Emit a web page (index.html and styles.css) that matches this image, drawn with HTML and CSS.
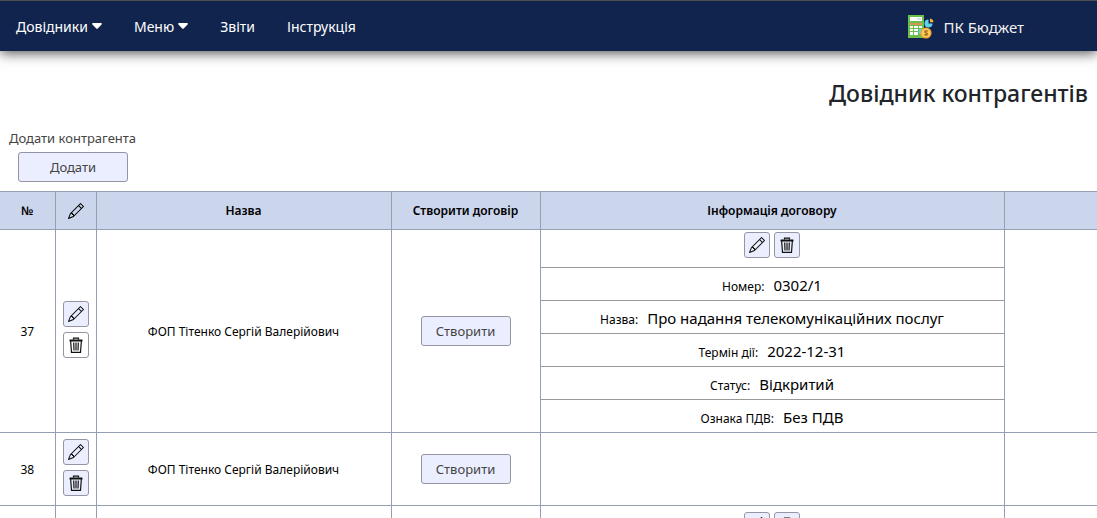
FILE: index.html
```html
<!DOCTYPE html>
<html lang="uk">
<head>
<meta charset="utf-8">
<title>Довідник контрагентів</title>
<link rel="stylesheet" href="styles.css">
</head>
<body>
<svg class="sprite" aria-hidden="true">
  <symbol id="pencil" viewBox="0 0 16 16">
    <path d="M12.146.146a.5.5 0 0 1 .708 0l3 3a.5.5 0 0 1 0 .708l-10 10a.5.5 0 0 1-.168.11l-5 2a.5.5 0 0 1-.65-.65l2-5a.5.5 0 0 1 .11-.168zM11.207 2.5 13.5 4.793 14.793 3.5 12.5 1.207zm1.586 3L10.5 3.207 4 9.707V10h.5a.5.5 0 0 1 .5.5v.5h.5a.5.5 0 0 1 .5.5v.5h.293zm-9.761 5.175-.106.106-1.528 3.821 3.821-1.528.106-.106A.5.5 0 0 1 5 12.500V12h-.5a.5.5 0 0 1-.5-.5V11h-.5a.5.5 0 0 1-.468-.325"/>
  </symbol>
  <symbol id="trash" viewBox="0 0 16 16">
    <path fill="none" stroke="currentColor" stroke-width="1.200" d="M5.500 2.500V1.200h5v1.300M2.600 3.500l.9 11.900h9l.9-11.900M5.700 5.500l.3 8M8 5.500v8M10.300 5.500l-.3 8"/>
    <rect x="1.500" y="2.600" width="13" height="1.800" rx=".5"/>
  </symbol>
  <symbol id="caret" viewBox="0 0 10 6">
    <path d="M1 0h8a.8.8 0 0 1 .6 1.400L5.700 5.600a1 1 0 0 1-1.400 0L.4 1.400A.8.8 0 0 1 1 0z"/>
  </symbol>
</svg>

<header class="topbar">
  <nav class="nav">
    <button class="nav-item" type="button">Довідники<svg class="caret" aria-hidden="true"><use href="#caret"/></svg></button>
    <button class="nav-item" type="button">Меню<svg class="caret" aria-hidden="true"><use href="#caret"/></svg></button>
    <a class="nav-item" href="#reports">Звіти</a>
    <a class="nav-item" href="#help">Інструкція</a>
  </nav>
  <a class="brand" href="#home">
    <svg class="logo" viewBox="0 0 26 24" aria-hidden="true">
      <rect width="16" height="23" fill="#6cc04a"/>
      <rect x="2" y="2" width="12" height="4" fill="#fff"/>
      <rect x="9" y="3" width="4" height="2" fill="#dce3e8"/>
      <path fill="#f08a5d" d="M2 8h3v2H2zM6 8h4v2H6zM11 8h3v2h-3z"/>
      <path fill="#fff" d="M2 11h3v2H2zM6 11h4v2H6zM11 11h3v2h-3zM2 14h3v2H2zM6 14h4v2H6zM2 17h3v3H2zM6 17h4v3H6z"/>
      <path fill="#5ed3e6" d="M11 14h4v5h-4zM20.500 4.500v4h4a4 4 0 1 1-4-4z"/>
      <path fill="#f9b233" d="M22 3.500a4 4 0 0 1 3.500 3.800H22z"/>
      <circle cx="18" cy="18" r="5.600" fill="#f5a833"/>
      <circle cx="18" cy="18" r="4" fill="#ffd05c"/>
      <path fill="none" stroke="#a8742a" stroke-width="1.200" d="M19.800 16.300c-.6-.9-3.300-.8-3.300.5 0 1.500 3.300.8 3.300 2.300 0 1.300-2.800 1.300-3.500.3M18 15v6"/>
    </svg>
    <span>ПК Бюджет</span>
  </a>
</header>

<main>
  <h1 class="title">Довідник контрагентів</h1>
  <section class="add">
    <label class="add-label" for="add">Додати контрагента</label>
    <button class="btn btn-add" id="add" type="button">Додати</button>
  </section>

  <table class="grid">
    <colgroup>
      <col class="c-num"><col class="c-tools"><col class="c-name"><col class="c-create"><col class="c-info"><col>
    </colgroup>
    <thead>
      <tr>
        <th>№</th>
        <th><svg class="icon" aria-label="Редагувати"><use href="#pencil"/></svg></th>
        <th>Назва</th>
        <th>Створити договір</th>
        <th>Інформація договору</th>
        <th></th>
      </tr>
    </thead>
    <tbody>
      <tr>
        <td>37</td>
        <td>
          <div class="tools">
            <button class="icon-btn" type="button" aria-label="Редагувати"><svg class="icon"><use href="#pencil"/></svg></button>
            <button class="icon-btn plain" type="button" aria-label="Видалити"><svg class="icon"><use href="#trash"/></svg></button>
          </div>
        </td>
        <td>ФОП Тітенко Сергій Валерійович</td>
        <td><button class="btn" type="button">Створити</button></td>
        <td>
          <div class="info-tools">
            <button class="icon-btn" type="button" aria-label="Редагувати"><svg class="icon"><use href="#pencil"/></svg></button>
            <button class="icon-btn" type="button" aria-label="Видалити"><svg class="icon"><use href="#trash"/></svg></button>
          </div>
          <p class="info"><span>Номер:</span><span class="value">0302/1</span></p>
          <p class="info"><span>Назва:</span><span class="value">Про надання телекомунікаційних послуг</span></p>
          <p class="info"><span>Термін дії:</span><span class="value">2022-12-31</span></p>
          <p class="info"><span>Статус:</span><span class="value">Відкритий</span></p>
          <p class="info"><span>Ознака ПДВ:</span><span class="value">Без ПДВ</span></p>
        </td>
        <td></td>
      </tr>
      <tr>
        <td>38</td>
        <td>
          <div class="tools">
            <button class="icon-btn" type="button" aria-label="Редагувати"><svg class="icon"><use href="#pencil"/></svg></button>
            <button class="icon-btn" type="button" aria-label="Видалити"><svg class="icon"><use href="#trash"/></svg></button>
          </div>
        </td>
        <td>ФОП Тітенко Сергій Валерійович</td>
        <td><button class="btn" type="button">Створити</button></td>
        <td></td>
        <td></td>
      </tr>
      <tr>
        <td></td>
        <td></td>
        <td></td>
        <td></td>
        <td>
          <div class="info-tools next">
            <button class="icon-btn" type="button" aria-label="Редагувати"><svg class="icon"><use href="#pencil"/></svg></button>
            <button class="icon-btn" type="button" aria-label="Видалити"><svg class="icon"><use href="#trash"/></svg></button>
          </div>
        </td>
        <td></td>
      </tr>
    </tbody>
  </table>
</main>
</body>
</html>
```
FILE: styles.css
```css
* { box-sizing: border-box; }

html { height: 100%; overflow: hidden; }

body {
  margin: 0;
  height: 100%;
  overflow: hidden;
  background: #fff;
  color: #000;
  font-family: "Noto Sans", "Open Sans", sans-serif;
  font-size: 12px;
}

button { font: inherit; color: inherit; }

.sprite { display: none; }

.topbar {
  display: flex;
  justify-content: space-between;
  align-items: center;
  height: 51px;
  padding: 0 73px 0 16px;
  border-top: 1px solid #4d4d4d;
  background: #11244d;
  color: #fff;
  font-size: 14px;
  box-shadow: 0 2px 12px rgba(0, 0, 0, 0.7);
}

.nav { display: flex; gap: 32px; }

.nav-item {
  display: flex;
  align-items: center;
  gap: 4px;
  padding: 0;
  border: 0;
  background: none;
  color: #fff;
  text-decoration: none;
}

.caret {
  width: 10px;
  height: 6px;
  fill: currentColor;
}

.brand {
  display: flex;
  align-items: center;
  gap: 9px;
  padding-top: 2px;
  color: #f0f0f0;
  font-size: 15px;
  text-decoration: none;
}

.logo { width: 26px; height: 24px; }

.title {
  margin: 0;
  padding: 26px 9px 0 0;
  color: #212529;
  font-size: 23px;
  font-weight: 500;
  line-height: 32px;
  text-align: right;
}

.add {
  display: flex;
  flex-direction: column;
  align-items: flex-start;
  gap: 4px;
  padding: 20px 9px 9px;
}

.add-label { color: #444; font-size: 13px; line-height: 19px; }

.btn {
  width: 90px;
  height: 30px;
  padding: 0;
  border: 1px solid #9494a4;
  border-radius: 3px;
  background: #ebeeff;
  color: #444;
  font-size: 13px;
}

.btn-add { width: 110px; margin-left: 9px; }

.grid {
  width: 100%;
  table-layout: fixed;
  border-collapse: collapse;
}

.c-num { width: 55px; }
.c-tools { width: 41px; }
.c-name { width: 295px; }
.c-create { width: 149px; }
.c-info { width: 464px; }

.grid th,
.grid td {
  padding: 0;
  border: 1px solid #94a0b2;
  text-align: center;
  vertical-align: middle;
}

.grid th:first-child,
.grid td:first-child { border-left: 0; }

.grid th:last-child,
.grid td:last-child { border-right: 0; }

.grid th {
  height: 38px;
  background: #cbd5ec;
  font-weight: 600;
}

.icon {
  display: block;
  width: 16px;
  height: 16px;
  margin: auto;
  fill: currentColor;
}

.icon-btn {
  width: 26px;
  height: 26px;
  padding: 0;
  border: 1px solid #9494a4;
  border-radius: 3px;
  background: #ebeeff;
  color: #111;
}

.icon-btn.plain { background: #fff; }

.tools {
  display: flex;
  flex-direction: column;
  align-items: center;
  gap: 5px;
  padding: 6px 0 9px;
}

.info-tools {
  display: flex;
  justify-content: center;
  gap: 4px;
  height: 37px;
  padding-top: 2px;
}

.info-tools.next { padding-top: 6px; }

.info {
  display: flex;
  justify-content: center;
  align-items: baseline;
  gap: 9px;
  height: 33px;
  margin: 0;
  padding-top: 3px;
  border-top: 1px solid #999;
  line-height: 28px;
}

.value { font-size: 15px; }
```
